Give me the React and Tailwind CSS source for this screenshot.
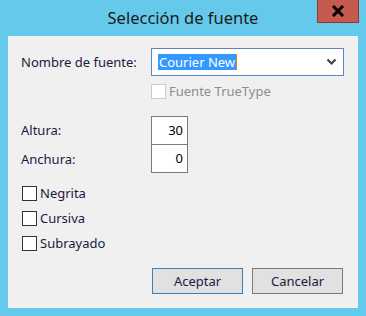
import React from 'react';

const font = { fontFamily: '"Noto Sans", "Open Sans", sans-serif' };

const Check = ({ label, disabled }) => (
  <label className="flex items-center gap-[3px] h-[16px]">
    <span
      className={`w-[15px] h-[15px] border bg-white ${disabled ? 'border-[#cccccc]' : 'border-[#333333]'}`}
    />
    <span className={disabled ? 'text-[#8d8d8d]' : 'text-[#1a1a40]'}>{label}</span>
  </label>
);

const NumBox = ({ value, className = '' }) => (
  <div
    className={`w-[37px] h-[29px] border border-[#7a7a7a] bg-white flex items-center justify-end pr-[4px] text-[#000] ${className}`}
  >
    {value}
  </div>
);

export default function App() {
  return (
    <div
      className="w-[366px] h-[316px] bg-[#64c9ea] flex flex-col text-[13px] leading-none"
      style={font}
    >
      <div className="relative h-[36px] flex items-center justify-center">
        <span className="text-[16.5px] text-[#1a1a1a]">Selección de fuente</span>
        <button className="absolute right-[7px] top-0 w-[42px] h-[23px] bg-[#c75a50] border border-[#8a3a32] border-t-0 flex items-center justify-center">
          <svg width="14" height="12" viewBox="0 0 14 12">
            <path d="M2 1 L12 11 M12 1 L2 11" stroke="#000" strokeWidth="3" />
          </svg>
        </button>
      </div>

      <div className="mx-[8px] h-[272px] bg-[#f0f0f0] flex flex-col pl-[13px] pt-[12px]">
        <div className="flex items-center">
          <span className="w-[130px] text-[#1a1a40]">Nombre de fuente:</span>
          <div className="w-[193px] h-[28px] border border-[#5d85bd] bg-white flex items-center pl-[6px] pr-[6px]">
            <span className="bg-[#3399ff] text-white px-[1px] h-[16px] flex items-center border-r border-[#e07a20]">
              Courier New
            </span>
            <svg className="ml-auto" width="11" height="8" viewBox="0 0 11 8">
              <path d="M1.5 1.5 L5.5 5.5 L9.5 1.5" fill="none" stroke="#444" strokeWidth="2.2" />
            </svg>
          </div>
        </div>

        <div className="ml-[130px] mt-[7px]">
          <Check label="Fuente TrueType" disabled />
        </div>

        <div className="flex mt-[17px]">
          <div className="w-[130px] flex flex-col text-[#1a1a40]">
            <span className="h-[29px] flex items-center">Altura:</span>
            <span className="h-[29px] flex items-center">Anchura:</span>
          </div>
          <div className="flex flex-col">
            <NumBox value="30" />
            <NumBox value="0" className="mt-[-1px]" />
          </div>
        </div>

        <div className="flex flex-col gap-[9px] mt-[11px] ml-[1px]">
          <Check label="Negrita" />
          <Check label="Cursiva" />
          <Check label="Subrayado" />
        </div>

        <div className="flex gap-[9px] ml-[131px] mt-[17px]">
          <button className="w-[91px] h-[26px] bg-[#e1e1e1] border border-[#3c7fb1] text-[#1a1a40]">
            Aceptar
          </button>
          <button className="w-[91px] h-[26px] bg-[#e1e1e1] border border-[#7a7a7a] text-[#1a1a40]">
            Cancelar
          </button>
        </div>
      </div>
    </div>
  );
}
